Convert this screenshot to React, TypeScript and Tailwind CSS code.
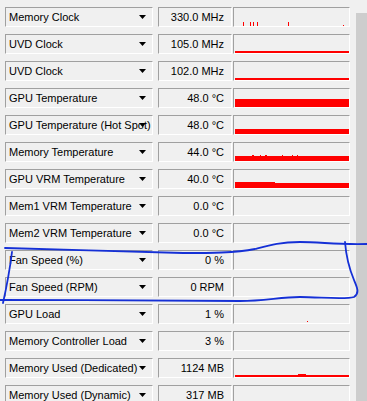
import React from "react";

type Mark = { x: number; y: number; w: number; h: number };

const line: Mark[] = [{ x: 1, y: 16, w: 114, h: 2 }];

const rows: { name: string; value: string; marks: Mark[] }[] = [
  {
    name: "Memory Clock",
    value: "330.0 MHz",
    marks: [
      { x: 9, y: 14, w: 1, h: 4 },
      { x: 16, y: 14, w: 1, h: 4 },
      { x: 19, y: 14, w: 1, h: 4 },
      { x: 23, y: 14, w: 1, h: 4 },
      { x: 54, y: 14, w: 1, h: 4 },
      { x: 109, y: 17, w: 1, h: 1 },
    ],
  },
  { name: "UVD Clock", value: "105.0 MHz", marks: line },
  { name: "UVD Clock", value: "102.0 MHz", marks: line },
  { name: "GPU Temperature", value: "48.0 °C", marks: [{ x: 1, y: 10, w: 114, h: 8 }] },
  { name: "GPU Temperature (Hot Spot)", value: "48.0 °C", marks: [{ x: 1, y: 13, w: 114, h: 5 }] },
  {
    name: "Memory Temperature",
    value: "44.0 °C",
    marks: [
      { x: 1, y: 13, w: 114, h: 5 },
      { x: 18, y: 12, w: 2, h: 1 },
      { x: 26, y: 12, w: 1, h: 1 },
      { x: 31, y: 12, w: 2, h: 1 },
      { x: 48, y: 12, w: 1, h: 1 },
      { x: 58, y: 12, w: 1, h: 1 },
      { x: 63, y: 12, w: 1, h: 1 },
    ],
  },
  {
    name: "GPU VRM Temperature",
    value: "40.0 °C",
    marks: [
      { x: 1, y: 13, w: 114, h: 5 },
      { x: 1, y: 12, w: 40, h: 1 },
    ],
  },
  { name: "Mem1 VRM Temperature", value: "0.0 °C", marks: [] },
  { name: "Mem2 VRM Temperature", value: "0.0 °C", marks: [] },
  { name: "Fan Speed (%)", value: "0 %", marks: [] },
  { name: "Fan Speed (RPM)", value: "0 RPM", marks: [] },
  { name: "GPU Load", value: "1 %", marks: [{ x: 73, y: 16, w: 1, h: 1 }] },
  { name: "Memory Controller Load", value: "3 %", marks: [] },
  {
    name: "Memory Used (Dedicated)",
    value: "1124 MB",
    marks: [
      { x: 1, y: 16, w: 114, h: 2 },
      { x: 64, y: 15, w: 8, h: 1 },
    ],
  },
  { name: "Memory Used (Dynamic)", value: "317 MB", marks: [] },
];

const font = { fontFamily: '"Liberation Sans", Arial, sans-serif' };

function Row({ name, value, marks }: { name: string; value: string; marks: Mark[] }) {
  return (
    <div className="flex h-[20px] shrink-0">
      <div className="relative flex h-[20px] w-[148px] items-center overflow-hidden border border-t-[#a0a0a0] border-l-[#a0a0a0] border-b-white border-r-white pl-[3px] text-[11px] leading-none text-black">
        <span className="whitespace-nowrap">{name}</span>
        <svg className="absolute left-[133px] top-[7px]" width="7" height="4" viewBox="0 0 7 4">
          <path d="M0 0 H7 L3.5 4 Z" fill="#000" />
        </svg>
      </div>
      <div className="ml-[5px] flex h-[20px] w-[74px] items-center justify-end border border-t-[#a0a0a0] border-l-[#a0a0a0] border-b-white border-r-white pr-[7px] text-[11px] leading-none text-black">
        <span className="whitespace-nowrap">{value}</span>
      </div>
      <div className="ml-[1px] h-[20px] w-[117px] border border-t-[#a0a0a0] border-l-[#a0a0a0] border-b-white border-r-white">
        <svg width="115" height="18" viewBox="0 0 115 18" className="block">
          {marks.map((m, i) => (
            <rect key={i} x={m.x} y={m.y} width={m.w} height={m.h} fill="#ff0000" />
          ))}
        </svg>
      </div>
    </div>
  );
}

export default function App() {
  return (
    <div className="relative flex h-[401px] w-[367px] overflow-hidden bg-[#f0f0f0]" style={font}>
      <div className="flex w-[355px] flex-col gap-[7px] pl-[5px] pt-[7px]">
        {rows.map((r, i) => (
          <Row key={i} {...r} />
        ))}
      </div>
      <div className="flex w-[12px] flex-col">
        <div className="h-[13px] bg-[#f0f0f0]" />
        <div className="ml-[1px] flex-1 bg-[#cdcdcd]" />
      </div>
      <svg className="pointer-events-none absolute left-0 top-0" width="367" height="401" viewBox="0 0 367 401">
        <path
          d="M5 248 C 60 249, 130 252, 183 253 C 210 253, 235 253, 255 249 C 270 245, 280 242, 300 242 C 320 242, 340 245, 367 244"
          fill="none"
          stroke="#1530d6"
          strokeWidth="1.8"
          strokeLinecap="round"
        />
        <path
          d="M345 242 C 346 255, 349 268, 354 280 C 357 287, 360 293, 354 297 C 345 300, 320 297, 300 297 C 280 297, 265 301, 240 301 C 180 300, 80 300, 0 300"
          fill="none"
          stroke="#1530d6"
          strokeWidth="1.8"
          strokeLinecap="round"
        />
        <path
          d="M12 252 C 10 268, 7 285, 3 303"
          fill="none"
          stroke="#1530d6"
          strokeWidth="1.8"
          strokeLinecap="round"
        />
      </svg>
    </div>
  );
}
